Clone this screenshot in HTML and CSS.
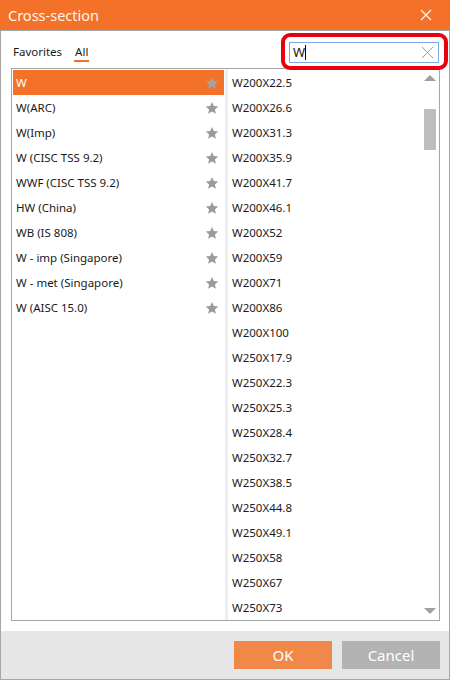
FILE: index.html
```html
<!DOCTYPE html>
<html>
<head>
<meta charset="utf-8">
<link rel="stylesheet" href="styles.css">
</head>
<body>
<div class="window">
  <div class="titlebar">
    <span class="title">Cross-section</span>
    <svg class="close" width="12" height="12" viewBox="0 0 12 12"><path d="M1 1 L11 11 M11 1 L1 11" stroke="#fff" stroke-width="1.1" fill="none"/></svg>
  </div>
  <div class="body">
    <div class="main">
      <div class="toolbar">
        <div class="tabs">
          <span class="tab">Favorites</span>
          <span class="tab active">All</span>
        </div>
        <div class="search">
          <span class="search-text">W</span><span class="caret"></span>
          <svg class="clear" width="13" height="13" viewBox="0 0 13 13"><path d="M1 1 L12 12 M12 1 L1 12" stroke="#9a9a9a" stroke-width="1" fill="none"/></svg>
        </div>
        <div class="highlight"></div>
      </div>
      <div class="lists">
        <div class="left">
          <div class="row selected"><span>W</span><svg class="star" viewBox="0 0 24 24"><path d="M12 1.5l3.1 7.1 7.7.7-5.8 5.1 1.7 7.6L12 18l-6.7 4 1.7-7.6-5.8-5.1 7.7-.7z"/></svg></div>
          <div class="row"><span>W(ARC)</span><svg class="star" viewBox="0 0 24 24"><path d="M12 1.5l3.1 7.1 7.7.7-5.8 5.1 1.7 7.6L12 18l-6.7 4 1.7-7.6-5.8-5.1 7.7-.7z"/></svg></div>
          <div class="row"><span>W(Imp)</span><svg class="star" viewBox="0 0 24 24"><path d="M12 1.5l3.1 7.1 7.7.7-5.8 5.1 1.7 7.6L12 18l-6.7 4 1.7-7.6-5.8-5.1 7.7-.7z"/></svg></div>
          <div class="row"><span>W (CISC TSS 9.2)</span><svg class="star" viewBox="0 0 24 24"><path d="M12 1.5l3.1 7.1 7.7.7-5.8 5.1 1.7 7.6L12 18l-6.7 4 1.7-7.6-5.8-5.1 7.7-.7z"/></svg></div>
          <div class="row"><span>WWF (CISC TSS 9.2)</span><svg class="star" viewBox="0 0 24 24"><path d="M12 1.5l3.1 7.1 7.7.7-5.8 5.1 1.7 7.6L12 18l-6.7 4 1.7-7.6-5.8-5.1 7.7-.7z"/></svg></div>
          <div class="row"><span>HW (China)</span><svg class="star" viewBox="0 0 24 24"><path d="M12 1.5l3.1 7.1 7.7.7-5.8 5.1 1.7 7.6L12 18l-6.7 4 1.7-7.6-5.8-5.1 7.7-.7z"/></svg></div>
          <div class="row"><span>WB (IS 808)</span><svg class="star" viewBox="0 0 24 24"><path d="M12 1.5l3.1 7.1 7.7.7-5.8 5.1 1.7 7.6L12 18l-6.7 4 1.7-7.6-5.8-5.1 7.7-.7z"/></svg></div>
          <div class="row"><span>W - imp (Singapore)</span><svg class="star" viewBox="0 0 24 24"><path d="M12 1.5l3.1 7.1 7.7.7-5.8 5.1 1.7 7.6L12 18l-6.7 4 1.7-7.6-5.8-5.1 7.7-.7z"/></svg></div>
          <div class="row"><span>W - met (Singapore)</span><svg class="star" viewBox="0 0 24 24"><path d="M12 1.5l3.1 7.1 7.7.7-5.8 5.1 1.7 7.6L12 18l-6.7 4 1.7-7.6-5.8-5.1 7.7-.7z"/></svg></div>
          <div class="row"><span>W (AISC 15.0)</span><svg class="star" viewBox="0 0 24 24"><path d="M12 1.5l3.1 7.1 7.7.7-5.8 5.1 1.7 7.6L12 18l-6.7 4 1.7-7.6-5.8-5.1 7.7-.7z"/></svg></div>
        </div>
        <div class="divider"></div>
        <div class="right">
          <div class="items">
            <div class="item">W200X22.5</div>
            <div class="item">W200X26.6</div>
            <div class="item">W200X31.3</div>
            <div class="item">W200X35.9</div>
            <div class="item">W200X41.7</div>
            <div class="item">W200X46.1</div>
            <div class="item">W200X52</div>
            <div class="item">W200X59</div>
            <div class="item">W200X71</div>
            <div class="item">W200X86</div>
            <div class="item">W200X100</div>
            <div class="item">W250X17.9</div>
            <div class="item">W250X22.3</div>
            <div class="item">W250X25.3</div>
            <div class="item">W250X28.4</div>
            <div class="item">W250X32.7</div>
            <div class="item">W250X38.5</div>
            <div class="item">W250X44.8</div>
            <div class="item">W250X49.1</div>
            <div class="item">W250X58</div>
            <div class="item">W250X67</div>
            <div class="item">W250X73</div>
          </div>
          <div class="scrollbar">
            <svg class="arrow up" width="12" height="6" viewBox="0 0 12 6"><path d="M0 6 L6 0 L12 6 Z" fill="#a0a0a0"/></svg>
            <div class="thumb"></div>
            <div class="track"></div>
            <svg class="arrow down" width="12" height="6" viewBox="0 0 12 6"><path d="M0 0 L6 6 L12 0 Z" fill="#a0a0a0"/></svg>
          </div>
        </div>
      </div>
    </div>
    <div class="footer">
      <button class="btn ok">OK</button>
      <button class="btn cancel">Cancel</button>
    </div>
  </div>
</div>
</body>
</html>
```
FILE: styles.css
```css
* { box-sizing: border-box; }
html, body { margin: 0; padding: 0; background: #fff; }
body { font-family: "Noto Sans", "Open Sans", sans-serif; font-size: 11.5px; color: #1a1a1a; }

.window { width: 450px; height: 680px; display: flex; flex-direction: column; }

.titlebar {
  height: 30px; background: #f37128; display: flex; align-items: center;
  justify-content: space-between; padding: 0 18px 0 8px; color: #fff;
}
.title { font-size: 14.5px; color: #fff5ee; }
.close { display: block; }

.body {
  flex: 1; display: flex; flex-direction: column;
  border: 1px solid #a6a6a6; min-height: 0;
}
.main { flex: 1; display: flex; flex-direction: column; padding: 11px 9px 10px 10px; background: #fff; min-height: 0; }

.toolbar { position: relative; display: flex; justify-content: space-between; align-items: flex-start; height: 26px; }
.tabs { display: flex; gap: 12px; padding: 1px 0 0 2px; }
.tab { font-size: 11.5px; line-height: 17px; padding-bottom: 2px; }
.tab.active { border-bottom: 2px solid #f37128; padding: 0 1px; }

.search {
  width: 150px; height: 21px; border: 1px solid #7ea9dc; margin-right: 1px;
  display: flex; align-items: center; padding-left: 3px; position: relative;
}
.search-text { font-size: 13px; line-height: 17px; }
.caret { width: 1px; height: 15px; background: #000; margin-left: 0; }
.clear { position: absolute; right: 4px; top: 3px; }

.highlight {
  position: absolute; right: -8px; top: -9px; width: 167px; height: 37px;
  border: 4px solid #e8000f; border-radius: 9px; pointer-events: none;
}

.lists { flex: 1; display: flex; border: 1px solid #a6a6a6; min-height: 0; }

.left { width: 213px; padding: 1px 1px 0 1px; display: flex; flex-direction: column; }
.row {
  height: 25px; display: flex; align-items: center; justify-content: space-between;
  padding: 0 5px 0 3px;
}
.row.selected { background: #f37128; color: #fff; }
.star { width: 14px; height: 14px; fill: #9b9b9b; }
.row.selected .star { fill: #a3a3a3; }

.divider { width: 3px; background: #efefef; }

.right { flex: 1; display: flex; min-width: 0; }
.items { flex: 1; padding: 1px 0 0 4px; }
.item { height: 25px; display: flex; align-items: center; }

.scrollbar { width: 16px; display: flex; flex-direction: column; align-items: center; padding: 6px 0 6px; margin-right: 1px; }
.arrow { display: block; }
.thumb { width: 12px; height: 41px; background: #bdbdbd; margin-top: 28px; }
.track { flex: 1; }

.footer {
  height: 48px; background: #e6e6e6; display: flex; justify-content: flex-end;
  gap: 10px; padding: 10px 9px 9px 0;
}
.btn {
  width: 98px; height: 28px; border: none; color: #fff; font-family: "Noto Sans", sans-serif;
  font-size: 15px; padding: 0;
}
.btn.ok { background: #f0884a; }
.btn.cancel { background: #b3b3b3; }
```
